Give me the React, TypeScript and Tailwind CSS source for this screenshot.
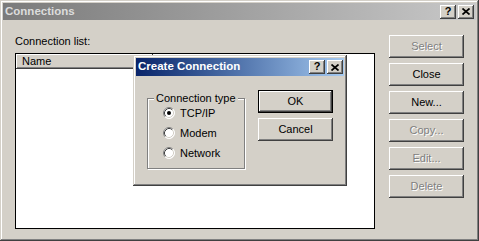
import type { ReactNode } from 'react'

const raised =
  'shadow-[inset_-1px_-1px_0_#404040,inset_1px_1px_0_#ffffff,inset_-2px_-2px_0_#808080,inset_2px_2px_0_#d4d0c8]'
const frame =
  'shadow-[inset_-1px_-1px_0_#404040,inset_1px_1px_0_#d4d0c8,inset_-2px_-2px_0_#808080,inset_2px_2px_0_#ffffff]'

function CapButton({ children }: { children: ReactNode }) {
  return (
    <div className={`w-[16px] h-[14px] bg-[#d4d0c8] flex items-center justify-center ${raised}`}>
      {children}
    </div>
  )
}

function CaptionButtons() {
  return (
    <div className="flex items-center gap-[2px]">
      <CapButton>
        <span className="font-bold text-[11px] leading-none text-black -mt-[1px]">?</span>
      </CapButton>
      <CapButton>
        <svg width="8" height="7" viewBox="0 0 8 7">
          <path d="M0.5 0.5L7.5 6.5M7.5 0.5L0.5 6.5" stroke="#000" strokeWidth="1.7" />
        </svg>
      </CapButton>
    </div>
  )
}

function Button({ label, disabled, isDefault }: { label: string; disabled?: boolean; isDefault?: boolean }) {
  return (
    <div
      className={`h-[23px] w-[75px] flex items-center justify-center bg-[#d4d0c8] ${raised} ${
        isDefault ? 'border border-black' : ''
      } ${disabled ? 'text-[#808080] [text-shadow:1px_1px_0_#ffffff]' : 'text-black'}`}
    >
      {label}
    </div>
  )
}

function Radio({ label, checked }: { label: string; checked?: boolean }) {
  return (
    <div className="h-[20px] flex items-center gap-[5px] pl-[15px]">
      <svg width="12" height="12" viewBox="0 0 12 12">
        <circle cx="6" cy="6" r="5.5" fill="#fff" />
        <path d="M2.11 9.89A5.5 5.5 0 0 1 9.89 2.11" stroke="#808080" fill="none" />
        <path d="M9.89 2.11A5.5 5.5 0 0 1 2.11 9.89" stroke="#ffffff" fill="none" />
        <path d="M2.82 9.18A4.5 4.5 0 0 1 9.18 2.82" stroke="#404040" fill="none" />
        <path d="M9.18 2.82A4.5 4.5 0 0 1 2.82 9.18" stroke="#d4d0c8" fill="none" />
        {checked && <circle cx="6" cy="6" r="2" fill="#000" />}
      </svg>
      <span>{label}</span>
    </div>
  )
}

export default function App() {
  return (
    <div
      className={`relative w-[479px] h-[241px] bg-[#d4d0c8] p-[3px] flex flex-col font-['Liberation_Sans',Arial,sans-serif] text-[11px] text-black ${frame}`}
    >
      <div className="h-[17px] flex items-center justify-between pl-[2px] pr-[2px] bg-gradient-to-r from-[#7b7b7b] to-[#c8c8c8]">
        <span className="font-bold text-[11.5px] text-[#dcdcdc]">Connections</span>
        <CaptionButtons />
      </div>

      <div className="flex flex-1 px-[12px] gap-[14px]">
        <div className="w-[360px] flex flex-col pt-[14px]">
          <div className="h-[14px] leading-[14px] mb-[5px]">Connection list:</div>
          <div className="h-[176px] border border-black bg-white">
            <div className="h-[15px] flex">
              <div className={`w-[137px] bg-[#d4d0c8] pl-[6px] leading-[15px] ${raised}`}>Name</div>
            </div>
          </div>
        </div>
        <div className="flex flex-col gap-[5px] pt-[15px]">
          <Button label="Select" disabled />
          <Button label="Close" />
          <Button label="New..." />
          <Button label="Copy..." disabled />
          <Button label="Edit..." disabled />
          <Button label="Delete" disabled />
        </div>
      </div>

      {/* modal dialog over the list */}
      <div className={`absolute left-[133px] top-[55px] w-[214px] h-[131px] bg-[#d4d0c8] p-[3px] flex flex-col ${frame}`}>
        <div className="h-[18px] flex items-center justify-between pl-[2px] pr-[1px] bg-gradient-to-r from-[#0a246a] to-[#a6caf0]">
          <span className="font-bold text-[11.5px] text-white">Create Connection</span>
          <CaptionButtons />
        </div>
        <div className="flex px-[11px] gap-[13px]">
          <div className="relative mt-[22px] w-[98px] h-[71px] border border-[#808080] shadow-[1px_1px_0_#ffffff,inset_1px_1px_0_#ffffff] pt-[4px]">
            <span className="absolute -top-[7px] left-[6px] px-[2px] bg-[#d4d0c8] leading-[13px]">Connection type</span>
            <Radio label="TCP/IP" checked />
            <Radio label="Modem" />
            <Radio label="Network" />
          </div>
          <div className="flex flex-col gap-[5px] mt-[14px]">
            <Button label="OK" isDefault />
            <Button label="Cancel" />
          </div>
        </div>
      </div>
    </div>
  )
}
